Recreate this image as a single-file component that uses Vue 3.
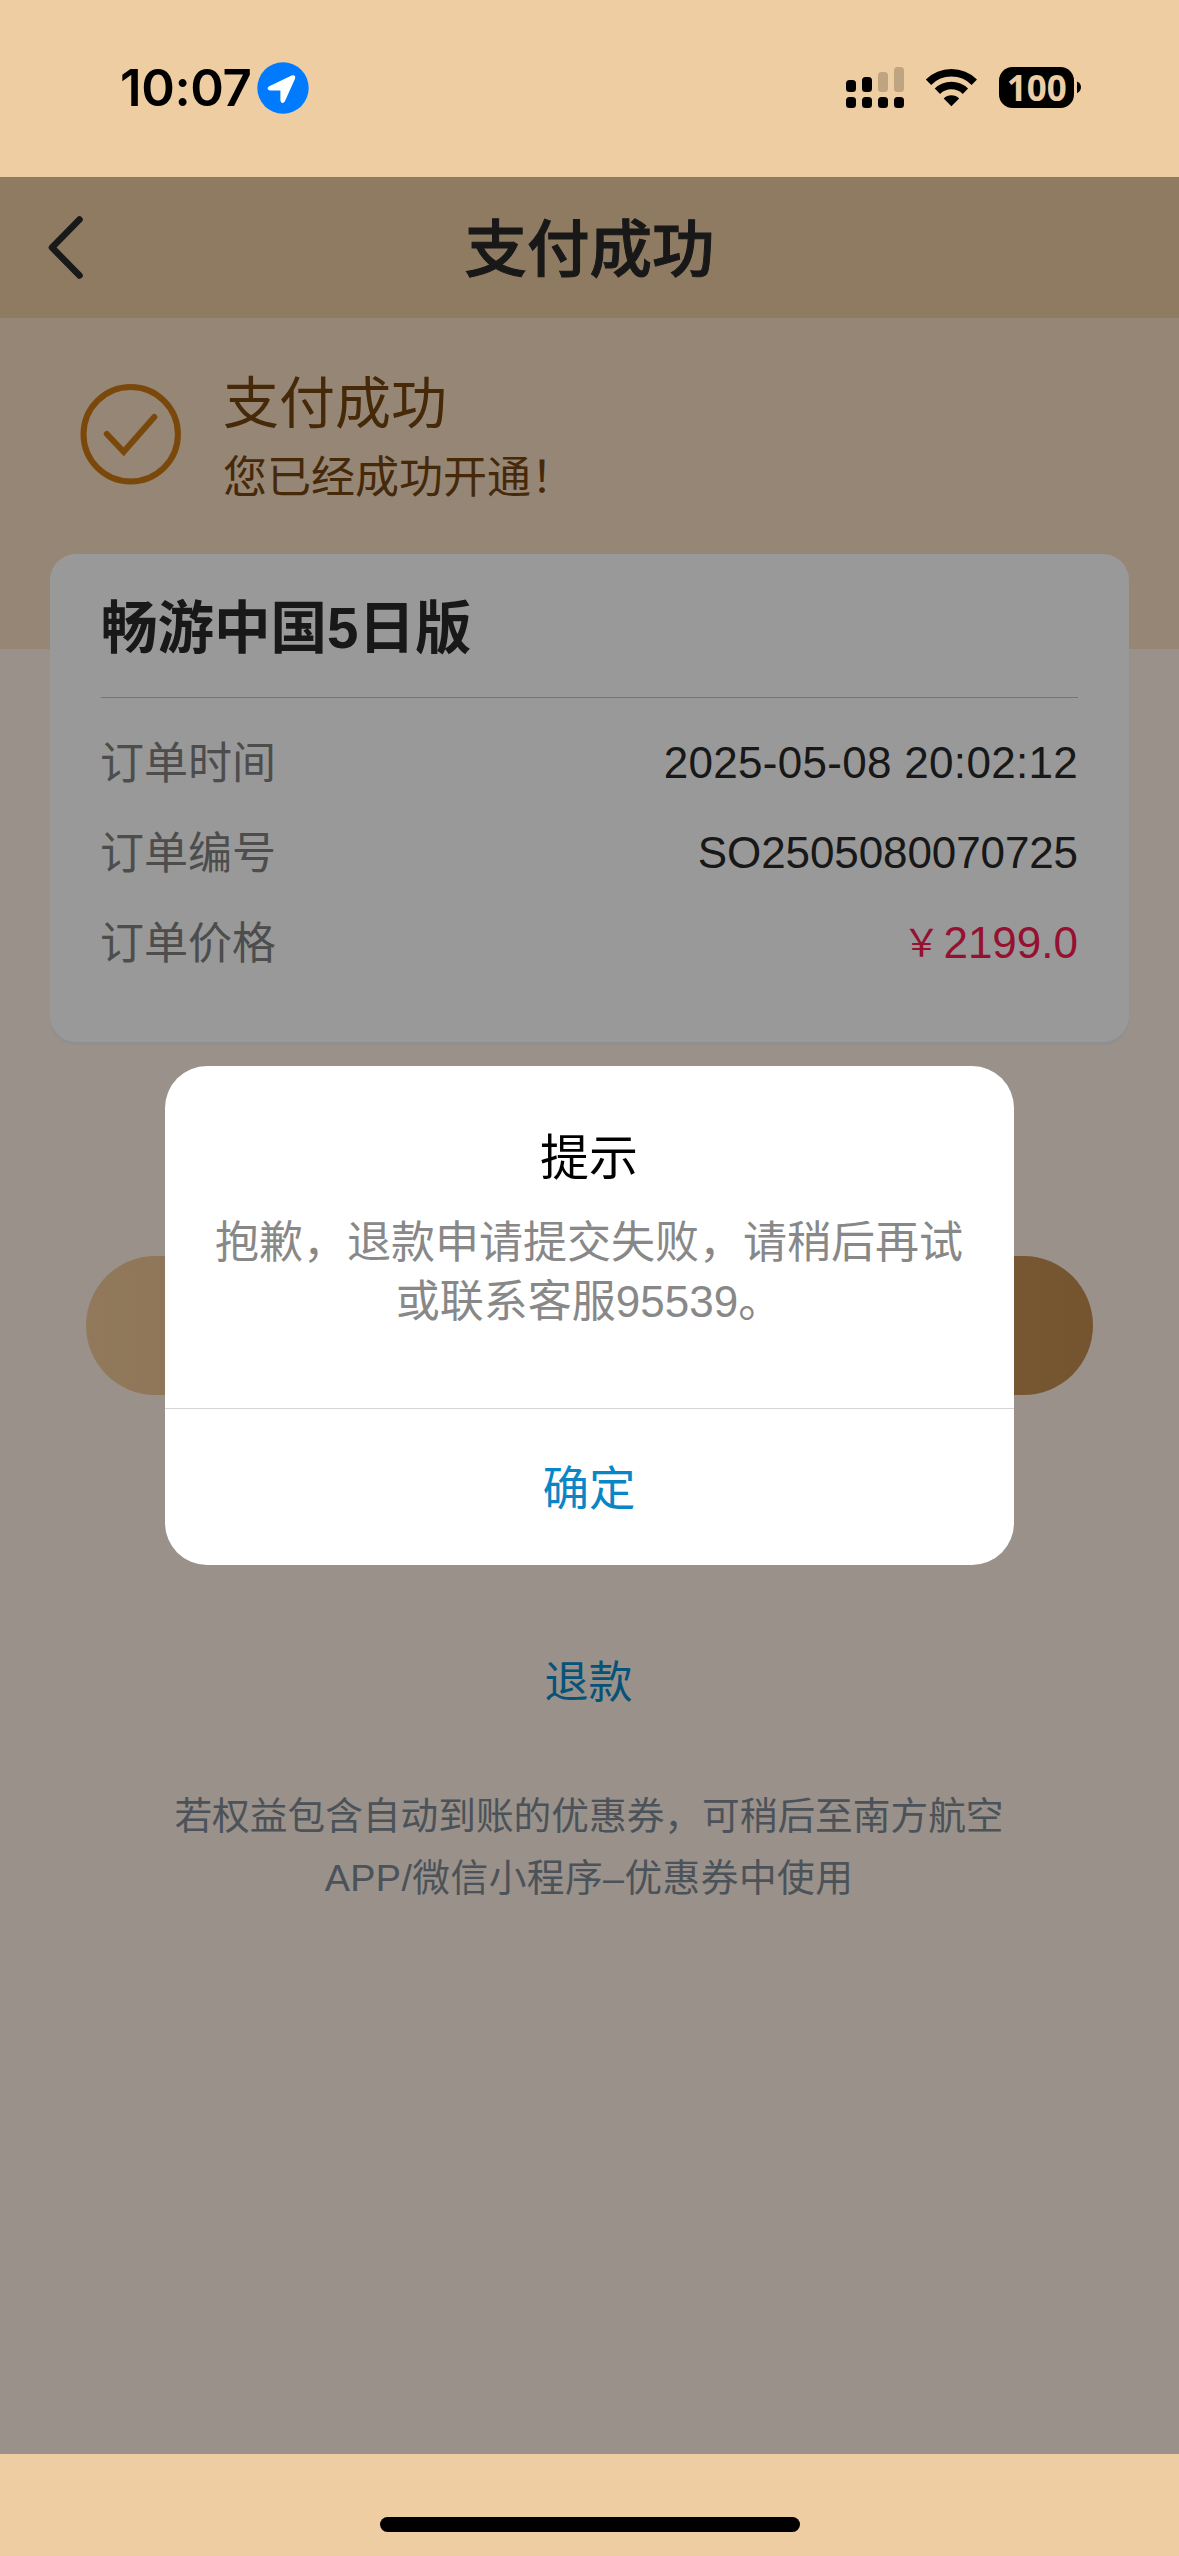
<script setup>
const rows = [
  { label: '订单时间', value: '2025-05-08 20:02:12', kind: 'date' },
  { label: '订单编号', value: 'SO2505080070725', kind: 'code' },
  { label: '订单价格', unit: '￥', value: '2199.0', kind: 'price' },
]
</script>

<template>
  <div class="screen">
    <div class="status">
      <span class="time">10:07</span>
      <svg class="loc" width="52" height="52" viewBox="0 0 52 52">
        <circle cx="26" cy="26" r="25.7" fill="#007aff" />
        <path d="M12.2 24.200 34.600 13.500Q39.200 12.300 38 16.800L27.800 39.500Q24.800 43 23.400 38.800V28.400H12.800Q8.600 27 12.200 24.200Z" fill="#fff" />
      </svg>
      <svg class="system" width="240" height="60" viewBox="0 -8 240 60">
        <g fill="#000">
          <rect x="2" y="32" width="10" height="11" rx="3.5" />
          <rect x="18" y="32" width="10" height="11" rx="3.5" />
          <rect x="34" y="32" width="10" height="11" rx="3.5" />
          <rect x="50" y="32" width="10" height="11" rx="3.5" />
          <rect x="2" y="15" width="10" height="12" rx="3.5" />
          <rect x="18" y="12" width="10" height="15" rx="3.5" />
        </g>
        <g fill="#bfa482">
          <rect x="34" y="7" width="10" height="20" rx="3.5" />
          <rect x="50" y="2" width="10" height="25" rx="3.5" />
        </g>
        <g fill="none" stroke="#000" stroke-width="7.6">
          <path d="M84.500 17.200A32.500 32.500 0 0 1 130.300 17.200" />
          <path d="M93.400 26.200A20 20 0 0 1 121.400 26.200" />
        </g>
        <path d="M99.700 33.400A11 11 0 0 1 115.100 33.400L107.400 41.200Z" />
        <rect x="155" y="2" width="75" height="41" rx="13.5" />
        <path d="M233 16.500Q237 18.300 237 22.300Q237 26.300 233 28.200Z" />
        <text x="192.800" y="35.700" class="pct" text-anchor="middle" textLength="60" lengthAdjust="spacingAndGlyphs">100</text>
      </svg>
    </div>

    <div class="web">
      <header class="nav">
        <svg class="back" width="40" height="64" viewBox="0 0 40 64">
          <path d="M33.500 3.500 6 31.500 33.500 59.500" fill="none" stroke="#2b2b2b" stroke-width="6.600" stroke-linecap="round" stroke-linejoin="round" />
        </svg>
        <h1>支付成功</h1>
      </header>

      <section class="hero">
        <svg width="102" height="102" viewBox="0 0 102 102">
          <g fill="none" stroke="#cb7912" stroke-width="6" stroke-linecap="round">
            <circle cx="50.700" cy="51.300" r="47.200" />
            <path d="M26.800 51 43.700 68.700 74.300 34" />
          </g>
        </svg>
        <div class="hero-text">
          <div class="hero-title">支付成功</div>
          <div class="hero-sub">您已经成功开通！</div>
        </div>
      </section>

      <section class="card">
        <h2>畅游中国5日版</h2>
        <div v-for="r in rows" :key="r.label" class="row">
          <span class="label">{{ r.label }}</span>
          <span class="value" :class="r.kind"><span v-if="r.unit" class="unit">{{ r.unit }}</span>{{ r.value }}</span>
        </div>
      </section>

      <div class="cta"></div>
      <a class="refund">退款</a>
      <p class="note">若权益包含自动到账的优惠券，可稍后至南方航空<br /><span>APP/微信小程序–优惠券中使用</span></p>

      <div class="mask">
        <div class="dialog">
          <div class="body">
            <div class="title">提示</div>
            <div class="msg">抱歉，退款申请提交失败，请稍后再试<br />或联系客服95539。</div>
          </div>
          <div class="ok">确定</div>
        </div>
      </div>
    </div>

    <div class="home"><i></i></div>
  </div>
</template>

<style>
body {
  margin: 0;
}
</style>

<style scoped>
.screen {
  width: 1179px;
  height: 2556px;
  display: flex;
  flex-direction: column;
  background: #eecda3;
  font-family: "Liberation Sans", "Noto Sans CJK SC", sans-serif;
  overflow: hidden;
}
.status {
  height: 177px;
  box-sizing: border-box;
  padding: 57px 95px 0 120px;
  display: flex;
  align-items: flex-start;
}
.time {
  width: 137px;
  margin-top: 5px;
  font: 600 51px/52px Inter, sans-serif;
  letter-spacing: -0.4px;
  white-space: nowrap;
}
.loc {
  margin-top: 5px;
}
.system {
  margin-left: auto;
}
.pct {
  font: 700 36px "Noto Sans", sans-serif;
  fill: #eecda3;
}
.web {
  position: relative;
  height: 2277px;
  background: #fff2e6;
  display: flex;
  flex-direction: column;
}
.nav {
  height: 141px;
  background: #eecda3;
  display: grid;
  grid-template-columns: 100px 1fr 100px;
  align-items: center;
}
.back {
  margin-left: 46px;
}
.nav h1 {
  margin: 4px 0 0;
  text-align: center;
  font-size: 62.5px;
  line-height: 80px;
  font-weight: 500;
  -webkit-text-stroke: 1px #292929;
  color: #292929;
}
.hero {
  height: 331px;
  box-sizing: border-box;
  padding: 50px 0 0 80px;
  display: flex;
  align-items: flex-start;
  gap: 41px;
  background: #fadfc4;
  color: #75450f;
}
.hero > svg {
  margin-top: 15px;
}
.hero-title {
  font-size: 56px;
  line-height: 72px;
}
.hero-sub {
  font-size: 44px;
  line-height: 76px;
}
.card {
  margin: -95px 50px 0;
  height: 488px;
  box-sizing: border-box;
  padding: 0 51px;
  background: #fff;
  border-radius: 26px;
  box-shadow: 0 3px 1px #efefef;
}
.card h2 {
  height: 144px;
  box-sizing: border-box;
  margin: 0 0 20px;
  border-bottom: 1px solid #c4c4c4;
  font-size: 56.5px;
  line-height: 149px;
  font-weight: 700;
  color: #292929;
}
.row {
  height: 90px;
  display: flex;
  justify-content: space-between;
  align-items: center;
  font-size: 44px;
  line-height: 90px;
}
.label {
  margin: 2px 0 0 -1px;
  color: #808080;
}
.value {
  color: #292929;
}
.date {
  letter-spacing: 0.3px;
}
.code {
  letter-spacing: -0.1px;
}
.price {
  display: flex;
  color: #f81c52;
}
.unit {
  width: 44px;
  text-align: center;
  font-size: 38px;
}
.cta {
  margin: 214px 86px 0;
  height: 139px;
  border-radius: 70px;
  background: linear-gradient(90deg, #f3ca99, #c38d4f);
}
.refund {
  margin: 258px 2px 0 0;
  text-align: center;
  font-size: 44px;
  line-height: 60px;
  color: #0a8acb;
}
.note {
  margin: 73px 1px 0 0;
  text-align: center;
  font-size: 37.7px;
  line-height: 61.7px;
  color: #7d8995;
}
.note span {
  letter-spacing: 0.45px;
}
.mask {
  position: absolute;
  inset: 0;
  background: rgba(0, 0, 0, 0.4);
  display: flex;
  justify-content: center;
  align-items: center;
}
.dialog {
  width: 849px;
  height: 499px;
  background: #fff;
  border-radius: 42px;
  overflow: hidden;
  text-align: center;
}
.body {
  height: 343px;
  box-sizing: border-box;
  border-bottom: 1px solid #d4d4d4;
  padding-top: 58px;
}
.title {
  margin-right: 1px;
  font-size: 49px;
  line-height: 68px;
  color: #000;
}
.msg {
  margin: 21px 1px 0 0;
  font-size: 44px;
  line-height: 59.4px;
  color: #888;
}
.ok {
  margin-right: 1px;
  font-size: 46.5px;
  line-height: 161px;
  color: #0886c5;
}
.home {
  height: 102px;
  display: flex;
  justify-content: center;
  align-items: flex-start;
}
.home i {
  width: 420px;
  height: 15px;
  margin-top: 63px;
  border-radius: 8px;
  background: #000;
}
</style>
